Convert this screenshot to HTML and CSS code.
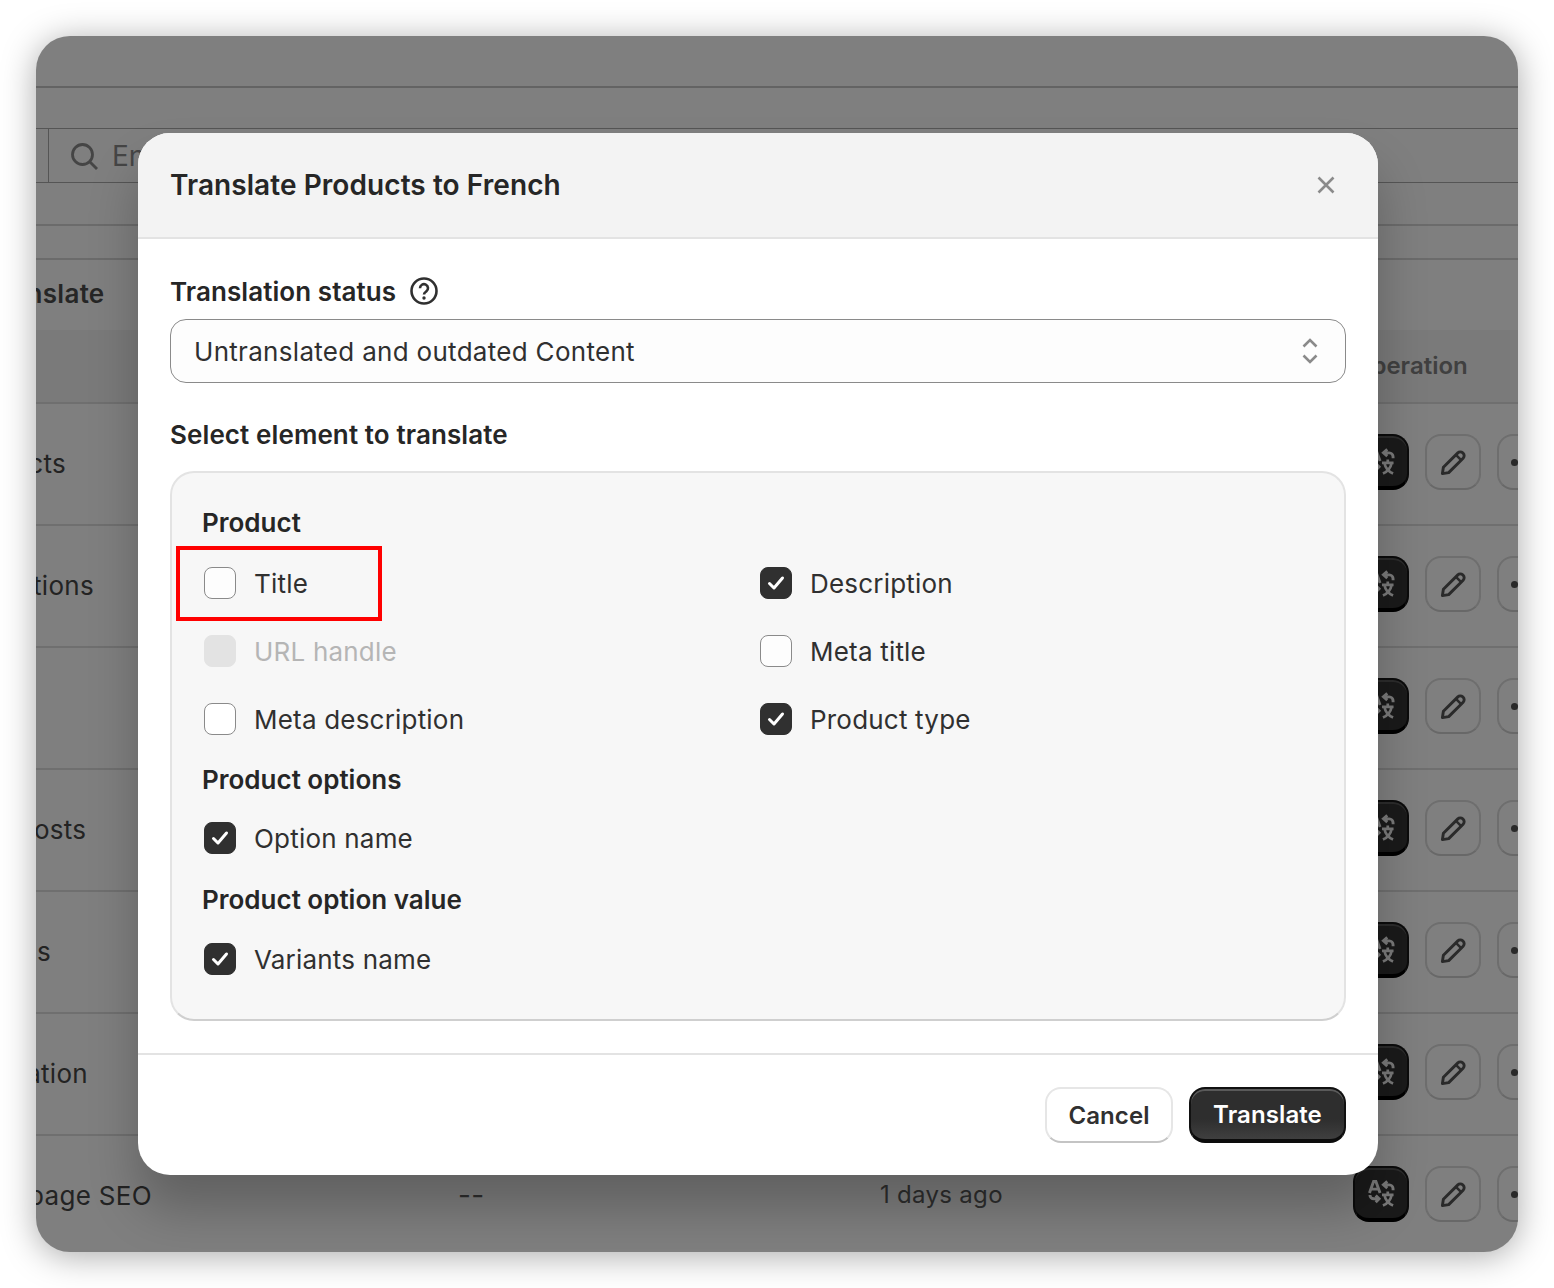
FILE: index.html
```html
<!DOCTYPE html>
<html lang="en">
<head>
<meta charset="utf-8">
<title>Translate Products to French</title>
<link rel="stylesheet" href="styles.css">
</head>
<body>
<svg class="defs" width="0" height="0" aria-hidden="true">
  <symbol id="i-tr" viewBox="0 0 28 28">
    <path d="M1.500 13.500 5.800 1.500h2.400l4.300 12M3.500 9.500h7" fill="none" stroke="currentColor" stroke-width="3"/>
    <path d="M20 1.500 16 5l4 3.500M16.500 5H22a4 4 0 0 1 4 4v1.500" fill="none" stroke="currentColor" stroke-width="3"/>
    <path d="M8 16l3.500 3.500L8 23M11 19.500H6A4 4 0 0 1 2 15.500" fill="none" stroke="currentColor" stroke-width="3"/>
    <path d="M14.500 15.500h12M17 15.500c.8 4 3.500 8.500 9 11M24.500 15.500c-.8 4-3.500 8.500-9 11M20.500 12v3.500" fill="none" stroke="currentColor" stroke-width="2.800"/>
  </symbol>
  <symbol id="i-pen" viewBox="0 0 28 28">
    <path d="M2.500 25.500l1-6.500L18.500 4a3.500 3.500 0 0 1 5 0l.5.500a3.500 3.500 0 0 1 0 5L9 24.500z" fill="none" stroke="currentColor" stroke-width="3" stroke-linejoin="round"/>
    <path d="M16.500 6l5.500 5.500" fill="none" stroke="currentColor" stroke-width="2.600"/>
  </symbol>
  <symbol id="i-check" viewBox="0 0 32 32">
    <path d="M9.500 16.500l4.500 4.500 8.500-10" fill="none" stroke="currentColor" stroke-width="3" stroke-linecap="round" stroke-linejoin="round"/>
  </symbol>
</svg>

<main class="window">
  <div class="app">
    <div class="bar bar-top"></div>
    <div class="bar bar-gap"></div>
    <div class="search-row">
      <div class="search-stub"></div>
      <div class="search">
        <svg class="search-icon" viewBox="0 0 28 28"><circle cx="12.500" cy="12.500" r="10" fill="none" stroke="currentColor" stroke-width="2.800"/><path d="M20 20l7 7" stroke="currentColor" stroke-width="2.800" fill="none"/></svg>
        <span>Enter keyword</span>
      </div>
    </div>
    <div class="bar bar-tabs"></div>
    <div class="bar bar-sub"></div>
    <div class="title-row"><span>Content to translate</span></div>
    <div class="table">
      <div class="row row-head"><span>Name</span><span>Status</span><span>Last update</span><span>Operation</span></div>
      <div class="row"><span>Products</span><span>--</span><span>1 days ago</span>
        <div class="actions"><button class="act act-dark"><svg class="ic"><use href="#i-tr"/></svg></button><button class="act"><svg class="ic"><use href="#i-pen"/></svg></button><button class="act act-more"><i></i></button></div></div>
      <div class="row"><span>Collections</span><span>--</span><span>1 days ago</span>
        <div class="actions"><button class="act act-dark"><svg class="ic"><use href="#i-tr"/></svg></button><button class="act"><svg class="ic"><use href="#i-pen"/></svg></button><button class="act act-more"><i></i></button></div></div>
      <div class="row"><span>Pages</span><span>--</span><span>1 days ago</span>
        <div class="actions"><button class="act act-dark"><svg class="ic"><use href="#i-tr"/></svg></button><button class="act"><svg class="ic"><use href="#i-pen"/></svg></button><button class="act act-more"><i></i></button></div></div>
      <div class="row"><span>Blog posts</span><span>--</span><span>1 days ago</span>
        <div class="actions"><button class="act act-dark"><svg class="ic"><use href="#i-tr"/></svg></button><button class="act"><svg class="ic"><use href="#i-pen"/></svg></button><button class="act act-more"><i></i></button></div></div>
      <div class="row"><span>Policies</span><span>--</span><span>1 days ago</span>
        <div class="actions"><button class="act act-dark"><svg class="ic"><use href="#i-tr"/></svg></button><button class="act"><svg class="ic"><use href="#i-pen"/></svg></button><button class="act act-more"><i></i></button></div></div>
      <div class="row"><span>Navigation</span><span>--</span><span>1 days ago</span>
        <div class="actions"><button class="act act-dark"><svg class="ic"><use href="#i-tr"/></svg></button><button class="act"><svg class="ic"><use href="#i-pen"/></svg></button><button class="act act-more"><i></i></button></div></div>
      <div class="row"><span>Homepage SEO</span><span>--</span><span>1 days ago</span>
        <div class="actions"><button class="act act-dark"><svg class="ic"><use href="#i-tr"/></svg></button><button class="act"><svg class="ic"><use href="#i-pen"/></svg></button><button class="act act-more"><i></i></button></div></div>
    </div>
  </div>

  <section class="modal">
    <header class="modal-head">
      <h1>Translate Products to French</h1>
      <svg class="close" viewBox="0 0 20 20"><path d="M2.500 2.500l15 15M17.500 2.500l-15 15" stroke="currentColor" stroke-width="2.600" fill="none"/></svg>
    </header>
    <div class="modal-body">
      <div class="field-label">
        <span>Translation status</span>
        <svg class="help" viewBox="0 0 28 28"><circle cx="14" cy="14" r="12.500" fill="none" stroke="currentColor" stroke-width="2.600"/><path d="M10 11.200a4 4 0 1 1 6.300 3.200c-1.400 1-2.300 1.600-2.300 3" fill="none" stroke="currentColor" stroke-width="2.600"/><circle cx="14" cy="21" r="1.700" fill="currentColor"/></svg>
      </div>
      <div class="select">
        <span>Untranslated and outdated Content</span>
        <svg class="updown" viewBox="0 0 18 28"><path d="M2.500 9.500 9 3l6.500 6.500M2.500 18.500 9 25l6.500-6.500" fill="none" stroke="currentColor" stroke-width="2.600"/></svg>
      </div>
      <div class="section-label">Select element to translate</div>
      <div class="box">
        <div class="group group-first">
          <h2>Product</h2>
          <div class="options">
            <label class="opt"><span class="cb"></span>Title</label>
            <label class="opt"><span class="cb cb-on"><svg><use href="#i-check"/></svg></span>Description</label>
            <label class="opt opt-off"><span class="cb"></span>URL handle</label>
            <label class="opt"><span class="cb"></span>Meta title</label>
            <label class="opt"><span class="cb cb-white"></span>Meta description</label>
            <label class="opt"><span class="cb cb-on"><svg><use href="#i-check"/></svg></span>Product type</label>
          </div>
        </div>
        <div class="group group-tight">
          <h2>Product options</h2>
          <div class="options">
            <label class="opt"><span class="cb cb-on"><svg><use href="#i-check"/></svg></span>Option name</label>
          </div>
        </div>
        <div class="group">
          <h2>Product option value</h2>
          <div class="options">
            <label class="opt"><span class="cb cb-on"><svg><use href="#i-check"/></svg></span>Variants name</label>
          </div>
        </div>
      </div>
    </div>
    <footer class="modal-foot">
      <button class="btn btn-light">Cancel</button>
      <button class="btn btn-dark">Translate</button>
    </footer>
    <div class="callout"></div>
  </section>
</main>
</body>
</html>
```
FILE: styles.css
```css
* { box-sizing: border-box; }
html, body { margin: 0; height: 100%; }
body {
  background: #fff;
  padding: 36px;
  overflow: hidden;
  font-family: Inter, "Liberation Sans", sans-serif;
  color: #303030;
}
.defs { position: absolute; }
.window {
  position: relative;
  width: 1482px;
  height: 1216px;
  border-radius: 34px;
  overflow: hidden;
  background: #7f7f7f;
  box-shadow: 0 4px 34px rgba(0, 0, 0, .34);
}

/* dimmed app behind the modal */
.app { color: #1f1f1f; }
.bar { border-bottom: 2px solid #6b6b6b; }
.bar-top { height: 52px; border-bottom-color: #636363; }
.bar-gap { height: 40px; border-bottom: 0; }
.search-row {
  height: 55px;
  display: flex;
  border-top: 1px solid #555;
  border-bottom: 1px solid #555;
}
.search-stub { width: 13px; border-right: 1px solid #555; }
.search {
  display: flex;
  align-items: center;
  gap: 14px;
  padding-left: 21px;
  font-size: 28px;
  color: #454545;
}
.search-icon { width: 28px; height: 28px; color: #454545; }
.bar-tabs { height: 43px; }
.bar-sub { height: 34px; }
.title-row {
  height: 70px;
  padding-bottom: 4px;
  display: flex;
  align-items: center;
  margin-left: -186px;
  font-size: 26px;
  font-weight: 600;
  letter-spacing: .3px;
  color: #262626;
  white-space: nowrap;
}
.table { margin-left: -82px; }
.row {
  height: 122px;
  padding-bottom: 2px;
  display: grid;
  grid-template-columns: 504px 422px 473px auto;
  align-items: center;
  border-top: 2px solid #6f6f6f;
  font-size: 26px;
  letter-spacing: .3px;
  color: #232323;
  white-space: nowrap;
}
.row > span:nth-child(2) { font-size: 28px; color: #2e2e2e; }
.row > span:nth-child(3) { font-size: 24px; color: #2e2e2e; padding-bottom: 2px; }
.row-head {
  height: 72px;
  border-top: 0;
  background: #7a7a7a;
  font-size: 24px;
  font-weight: 600;
  letter-spacing: 0;
  color: #404040;
}
.row-head > span:nth-child(2), .row-head > span:nth-child(3) { font-size: 24px; color: #404040; padding: 0; }
.actions { display: flex; gap: 16px; padding-bottom: 2px; }
.act {
  width: 56px;
  height: 56px;
  padding: 0;
  display: flex;
  align-items: center;
  justify-content: center;
  border-radius: 16px;
  border: 2px solid #6e6e6e;
  border-bottom-color: #686868;
  background: #7f7f7f;
  color: #2a2a2a;
  flex: none;
}
.act-dark {
  background: #1a1a1a;
  border: 2px solid #0b0b0b;
  border-bottom: 4px solid #000;
  box-shadow: inset 0 2px 0 #2c2c2c;
  color: #7a7a7a;
}
.ic { width: 27px; height: 27px; display: block; }
.act-more { justify-content: flex-start; }
.act-more i { width: 7px; height: 7px; border-radius: 50%; background: #2a2a2a; margin-left: 12px; }

/* modal */
.modal {
  position: absolute;
  left: 102px;
  top: 97px;
  width: 1240px;
  height: 1042px;
  border-radius: 32px;
  background: #fff;
  box-shadow: 0 34px 50px rgba(0, 0, 0, .24);
}
.modal-head {
  height: 106px;
  display: flex;
  align-items: center;
  justify-content: space-between;
  padding: 0 42px 0 32px;
  background: #f3f3f3;
  border-bottom: 2px solid #e3e3e3;
  border-radius: 32px 32px 0 0;
}
.modal-head h1 {
  margin: 0;
  font-size: 28px;
  line-height: 40px;
  font-weight: 600;
  letter-spacing: .07px;
  color: #262626;
}
.close { width: 20px; height: 20px; color: #8a8a8a; }
.modal-body { padding: 32px 32px 32px; }
.field-label {
  height: 40px;
  display: flex;
  align-items: center;
  gap: 14px;
  font-size: 26px;
  font-weight: 600;
  letter-spacing: .08px;
  color: #262626;
}
.help { width: 28px; height: 28px; color: #303030; }
.select {
  margin-top: 8px;
  height: 64px;
  display: flex;
  align-items: center;
  justify-content: space-between;
  padding: 0 26px 0 23px;
  border: 1px solid #8a8a8a;
  border-radius: 16px;
  background: #fdfdfd;
  font-size: 26px;
  letter-spacing: .3px;
  color: #303030;
}
.updown { width: 18px; height: 28px; color: #8a8a8a; }
.section-label {
  margin-top: 32px;
  height: 40px;
  line-height: 40px;
  font-size: 26px;
  font-weight: 600;
  letter-spacing: .1px;
  color: #262626;
}
.box {
  margin-top: 16px;
  height: 550px;
  padding: 30px 30px 0;
  border: 2px solid #e3e3e3;
  border-bottom-color: #cfcfcf;
  border-radius: 24px;
  background: #f7f7f7;
}
.group { margin-top: 8px; display: flex; flex-direction: column; gap: 5px; }
.group-first { margin-top: 0; gap: 6px; }
.group-tight { margin-top: 7px; gap: 4px; }
.group h2 {
  margin: 0;
  height: 40px;
  line-height: 40px;
  font-size: 26px;
  font-weight: 600;
  color: #262626;
}
.options { display: grid; grid-template-columns: 556px 1fr; }
.opt {
  height: 68px;
  display: flex;
  align-items: center;
  gap: 18px;
  padding-left: 2px;
  font-size: 26px;
  letter-spacing: .2px;
  color: #303030;
}
.opt-off { color: #b5b5b5; }
.cb {
  width: 32px;
  height: 32px;
  flex: none;
  border: 1.500px solid #8a8a8a;
  border-radius: 8px;
  background: #fdfdfd;
  display: block;
}
.cb-white { background: #fff; }
.opt-off .cb { border-color: #e3e3e3; background: #e3e3e3; }
.cb-on { border-color: #303030; background: #303030; color: #fff; position: relative; }
.cb-on svg { position: absolute; inset: -1.500px; width: 32px; height: 32px; }
.modal-foot {
  height: 122px;
  padding: 32px;
  display: flex;
  justify-content: flex-end;
  gap: 16px;
  border-top: 2px solid #e3e3e3;
}
.btn {
  height: 56px;
  border-radius: 16px;
  font: 600 24px Inter, "Liberation Sans", sans-serif;
  letter-spacing: .1px;
  padding: 0;
}
.btn-light {
  width: 128px;
  background: #fff;
  border: 2px solid #e6e6e6;
  border-bottom-color: #c4c4c4;
  color: #303030;
}
.btn-dark {
  width: 157px;
  color: #fff;
  background: linear-gradient(#2e2e2e 0 60%, #3f3f3f);
  border: 2px solid #111;
  border-bottom: 4px solid #0c0c0c;
  box-shadow: inset 0 2px 0 #5a5a5a;
}
.callout {
  position: absolute;
  left: 38px;
  top: 413px;
  width: 206px;
  height: 75px;
  border: 4px solid #f00;
}
```
